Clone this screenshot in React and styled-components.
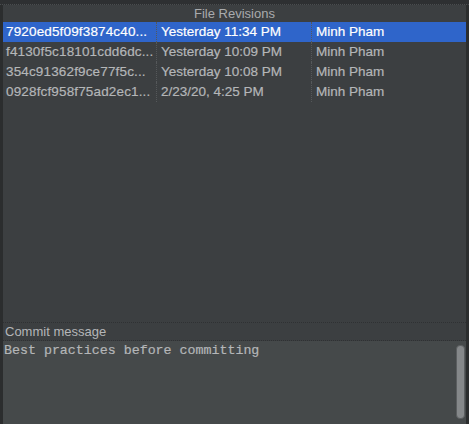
import styled, { createGlobalStyle } from "styled-components";

const GlobalStyle = createGlobalStyle`
  html, body {
    margin: 0;
    padding: 0;
    background: #2b2d2e;
  }
  #root {
    width: 469px;
    height: 424px;
  }
`;

const revisions = [
  { hash: "7920ed5f09f3874c40...", date: "Yesterday 11:34 PM", author: "Minh Pham" },
  { hash: "f4130f5c18101cdd6dc...", date: "Yesterday 10:09 PM", author: "Minh Pham" },
  { hash: "354c91362f9ce77f5c...", date: "Yesterday 10:08 PM", author: "Minh Pham" },
  { hash: "0928fcf958f75ad2ec1...", date: "2/23/20, 4:25 PM", author: "Minh Pham" },
];

const App = () => {
  return (
    <>
      <GlobalStyle />
      <Window>
        <TopStrip />
        <Panel>
          <Title>File Revisions</Title>
          <Table>
            {revisions.map((r, i) => (
              <Row key={r.hash} selected={i === 0}>
                <Cell width={154} spacing={0.15}>{r.hash}</Cell>
                <Cell width={155} pad={4}>{r.date}</Cell>
                <Cell pad={4}>{r.author}</Cell>
              </Row>
            ))}
          </Table>
          <Label>Commit message</Label>
          <MessageBox>
            <MessageText>Best practices before committing</MessageText>
            <Scrollbar>
              <Thumb />
            </Scrollbar>
          </MessageBox>
        </Panel>
      </Window>
    </>
  );
};

export default App;

const Window = styled.div`
  display: flex;
  flex-direction: column;
  width: 469px;
  height: 424px;
  background: #2b2d2e;
  font-family: "Liberation Sans", Arial, sans-serif;
`;

const TopStrip = styled.div`
  height: 4px;
  background: #2e3032;
  border-bottom: 1px dotted #4a4d4f;
`;

const Panel = styled.div`
  flex: 1;
  display: flex;
  flex-direction: column;
  margin: 0 3px 0 3px;
  background: #3c3f41;
  min-height: 0;
`;

const Title = styled.div`
  height: 17px;
  line-height: 17px;
  text-align: center;
  font-size: 13px;
  color: #a9abad;
`;

const Table = styled.div`
  flex: 1;
  display: flex;
  flex-direction: column;
`;

const Row = styled.div`
  display: flex;
  height: 20px;
  background: ${(p) => (p.selected ? "#2f65ca" : "transparent")};
  color: ${(p) => (p.selected ? "#ffffff" : "#b4b6b8")};
  font-size: 13.5px;
  line-height: 20px;
`;

const Cell = styled.div`
  width: ${(p) => (p.width ? `${p.width}px` : "auto")};
  flex: ${(p) => (p.width ? "none" : "1")};
  padding-left: ${(p) => p.pad || 3}px;
  box-sizing: border-box;
  white-space: nowrap;
  overflow: hidden;
  letter-spacing: ${(p) => p.spacing || 0}px;
  border-right: ${(p) => (p.width ? "1px dotted #55585a" : "none")};
  -webkit-text-stroke: 0.2px currentColor;
`;

const Label = styled.div`
  height: 17px;
  line-height: 18px;
  font-size: 13px;
  color: #b4b6b8;
  padding-left: 2px;
  border-top: 1px dotted #2f3133;
  border-bottom: 1px dotted #2f3133;
`;

const MessageBox = styled.div`
  height: 83px;
  display: flex;
  background: #45494a;
`;

const MessageText = styled.div`
  flex: 1;
  padding: 2px 0 0 1px;
  font-family: "Liberation Mono", "Courier New", monospace;
  font-size: 13.3px;
  line-height: 15px;
  color: #b4b6b8;
  -webkit-text-stroke: 0.2px currentColor;
`;

const Scrollbar = styled.div`
  width: 12px;
  display: flex;
  justify-content: center;
  padding: 4px 0 5px;
  box-sizing: border-box;
`;

const Thumb = styled.div`
  width: 7px;
  background: #85888a;
  border: 1px solid #5b5e60;
  border-radius: 4px;
`;
